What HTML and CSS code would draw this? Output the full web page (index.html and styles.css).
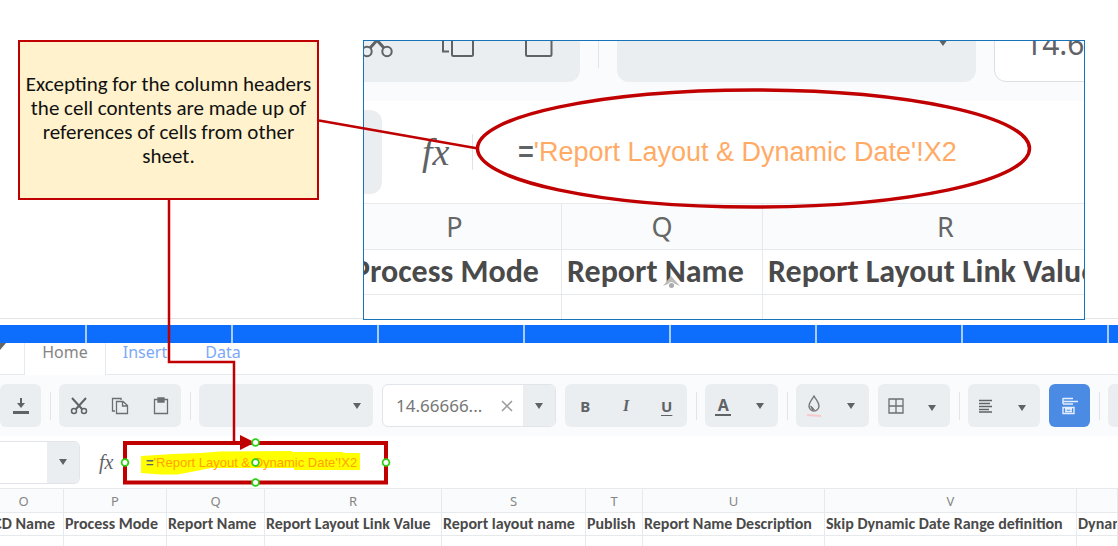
FILE: index.html
```html
<!DOCTYPE html>
<html lang="en">
<head>
<meta charset="utf-8">
<title>Report layout sheet</title>
<link rel="stylesheet" href="styles.css">
</head>
<body>
<main class="page">
  <section class="notes">
    <p class="callout">Excepting for the column headers the cell contents are made up of references of cells from other sheet.</p>
    <div class="inset">
      <div class="inset-tools">
        <div class="inset-group">
          <svg class="inset-icons" width="216" height="43" viewBox="0 0 216 43" fill="none" stroke="#5f6366" stroke-width="2">
            <circle cx="3" cy="10.500" r="4.700"/><circle cx="23" cy="10.500" r="4.700"/>
            <path d="M6 7L15 -3M20 7L11 -3" stroke-width="3"/>
            <path d="M79 -4V10.500H85M88 -4V13.500Q88 15 89.500 15H107.500Q109 15 109 13.500V-4M162 -4V13.500Q162 15 163.500 15H186Q187.500 15 187.500 13.500V-4"/>
          </svg>
        </div>
        <span class="inset-sep"></span>
        <div class="inset-font"><svg width="10" height="8" viewBox="0 0 10 8"><path d="M0 0H10L5 7z" fill="#5f6366"/></svg></div>
        <div class="inset-size">14.6</div>
      </div>
      <div class="inset-bar">
        <span class="inset-name"></span>
        <span class="fx fx-large">fx</span>
        <span class="inset-bar-sep"></span>
        <span class="formula formula-large"><b>=</b>'Report Layout &amp; Dynamic Date'!X2</span>
      </div>
      <div class="inset-grid">
        <table class="grid grid-large">
          <colgroup><col class="l-p"><col class="l-q"><col class="l-r"></colgroup>
          <thead><tr><th>P</th><th>Q</th><th>R</th></tr></thead>
          <tbody>
            <tr><td>Process Mode</td><td>Report Name</td><td>Report Layout Link Value</td></tr>
            <tr><td></td><td></td><td></td></tr>
          </tbody>
        </table>
      </div>
    </div>
  </section>

  <section class="sheet">
    <div class="band"><i></i><i></i><i></i><i></i><i></i><i></i><i></i><i></i><i></i></div>
    <nav class="tabs">
      <span class="tab-edge"><svg width="7" height="8" viewBox="0 0 7 8"><path d="M0 0H6L0 7z" fill="#666"/></svg></span>
      <a class="tab active" href="#">Home</a>
      <a class="tab" href="#">Insert</a>
      <a class="tab" href="#">Data</a>
    </nav>
    <div class="tools">
      <div class="group g-save"><button aria-label="Download"><svg width="16" height="18" viewBox="0 0 16 18"><path d="M7 1h2v5h3l-4 5-4-5h3zM0 14h16v3H0z" fill="#5f6366"/></svg></button></div>
      <span class="sep"></span>
      <div class="group g-three">
        <button aria-label="Cut"><svg width="18" height="18" viewBox="0 0 18 18" fill="none" stroke="#5f6366"><path d="M2 1l10 11M16 1L6 12" stroke-width="2"/><circle cx="4" cy="14" r="2.500" stroke-width="1.500"/><circle cx="14" cy="14" r="2.500" stroke-width="1.500"/></svg></button>
        <button aria-label="Copy"><svg width="18" height="18" viewBox="0 0 18 18" fill="none" stroke="#6b6f72" stroke-width="1.300"><path d="M4 14H1.500V1.500H10V3M5.500 4.500H12L16.500 8.500V16.500H5.500zM11.500 4.500V9H16"/></svg></button>
        <button aria-label="Paste"><svg width="18" height="18" viewBox="0 0 18 18" fill="none" stroke="#6b6f72" stroke-width="1.300"><path d="M2.500 2.500H15.500V16.500H2.500z"/><path d="M6 1h6v4H6z" fill="#6b6f72"/></svg></button>
      </div>
      <span class="sep"></span>
      <button class="group g-font" aria-label="Font family"><svg class="caret" viewBox="0 0 8 8"><path d="M0 1H8L4 7z"/></svg></button>
      <div class="combo">
        <input class="size" aria-label="Font size" value="14.66666...">
        <button class="clear" aria-label="Clear"><svg width="12" height="12" viewBox="0 0 12 12"><path d="M1 1L11 11M11 1L1 11" stroke="#999" stroke-width="1.500"/></svg></button>
        <button class="drop" aria-label="Font sizes"><svg class="caret" viewBox="0 0 8 8"><path d="M0 1H8L4 7z"/></svg></button>
      </div>
      <div class="group g-three">
        <button class="bold">B</button><button class="italic">I</button><button class="under">U</button>
      </div>
      <span class="sep"></span>
      <div class="group g-pair">
        <button aria-label="Text color"><span class="ink">A</span></button>
        <button aria-label="Text colors"><svg class="caret" viewBox="0 0 8 8"><path d="M0 1H8L4 7z"/></svg></button>
      </div>
      <span class="sep"></span>
      <div class="group g-pair">
        <button aria-label="Fill color"><svg width="16" height="22" viewBox="0 0 16 22" fill="none"><path d="M8 1C6 5 3 7 3 11a5 5 0 0 0 10 0C13 7 10 5 8 1z" stroke="#777" stroke-width="1.400"/><path d="M4 11c2-1 3 2 5 4H6z" fill="#777"/><path d="M1 20l14 1" stroke="#f6c9cd" stroke-width="2"/></svg></button>
        <button aria-label="Fill colors"><svg class="caret" viewBox="0 0 8 8"><path d="M0 1H8L4 7z"/></svg></button>
      </div>
      <div class="group g-tight">
        <button aria-label="Borders"><svg width="16" height="16" viewBox="0 0 16 16" fill="none" stroke="#6b6f72" stroke-width="1.300"><path d="M1 1H15V15H1zM8 1V15M1 8H15"/></svg></button>
        <button class="low" aria-label="Border styles"><svg class="caret" viewBox="0 0 8 8"><path d="M0 1H8L4 7z"/></svg></button>
      </div>
      <span class="sep"></span>
      <div class="group g-tight">
        <button aria-label="Align"><svg width="14" height="14" viewBox="0 0 14 14" stroke="#5f6366" stroke-width="1.300"><path d="M0 1.500H13M0 4.500H11M0 7.500H13M0 10.500H10M0 13H13"/></svg></button>
        <button class="low" aria-label="Align options"><svg class="caret" viewBox="0 0 8 8"><path d="M0 1H8L4 7z"/></svg></button>
      </div>
      <button class="group wrap" aria-label="Wrap text"><svg width="18" height="18" viewBox="0 0 18 18" fill="none" stroke="#e4eefc" stroke-width="1.400"><path d="M2 1.500H12M2 4.500H17M2 7H12M2 1V7M2 10.500H13V16.500H2zM4 12H11M4 14.500H11M5 12V15M10 12V15"/></svg></button>
      <span class="sep"></span>
      <div class="group g-pair"></div>
    </div>
    <div class="bar">
      <div class="namebox">
        <input class="name" aria-label="Cell name">
        <button class="drop" aria-label="Cell names"><svg class="caret" viewBox="0 0 8 8"><path d="M0 1H8L4 7z"/></svg></button>
      </div>
      <span class="fx">fx</span>
      <span class="marked">
        <svg class="marker" width="219" height="26" viewBox="0 0 219 26"><path d="M0 6L32 4L60 3L79 1.500L151 1V2H202V3H219V20H153V18L100 18L70 18L50 22L36 24.500H20L0 23z" fill="#ff0"/></svg>
        <span class="formula"><b>=</b>'Report Layout &amp; Dynamic Date'!X2</span>
      </span>
    </div>
    <table class="grid">
      <colgroup><col class="c-o"><col class="c-p"><col class="c-q"><col class="c-r"><col class="c-s"><col class="c-t"><col class="c-u"><col class="c-v"><col></colgroup>
      <thead><tr><th>O</th><th>P</th><th>Q</th><th>R</th><th>S</th><th>T</th><th>U</th><th>V</th><th></th></tr></thead>
      <tbody>
        <tr><td class="tail">CD Name</td><td>Process Mode</td><td>Report Name</td><td>Report Layout Link Value</td><td>Report layout name</td><td>Publish</td><td>Report Name Description</td><td>Skip Dynamic Date Range definition</td><td>Dynamic</td></tr>
        <tr><td></td><td></td><td></td><td></td><td></td><td></td><td></td><td></td><td></td></tr>
      </tbody>
    </table>
  </section>

  <svg class="shapes" width="1118" height="546" viewBox="0 0 1118 546" fill="none" stroke="#c00000">
    <ellipse cx="753.500" cy="148.500" rx="276" ry="58.500" stroke-width="3.500"/>
    <path d="M319 120.500L478 148.500" stroke-width="2.500"/>
    <path d="M169 200V362H234V441" stroke-width="2.500"/>
    <rect x="125" y="443" width="261" height="39.500" stroke-width="4"/>
    <path d="M240 435L255 442.500L240 450z" fill="#c00000" stroke="none"/>
    <g stroke="none"><path d="M663 286L671 276L680 286L675 284Q671 280 668 284z" fill="#bbb"/><circle cx="671.500" cy="285.500" r="2.500" fill="#aaa"/></g>
    <g fill="#fff" stroke="#2bd312" stroke-width="1.800">
      <circle cx="255.500" cy="442.500" r="3.400"/><circle cx="255.500" cy="462.500" r="3.400"/><circle cx="255.500" cy="482.500" r="3.400"/><circle cx="125" cy="462.500" r="3.400"/><circle cx="386" cy="462.500" r="3.400"/>
    </g>
  </svg>
</main>
</body>
</html>
```
FILE: styles.css
```css
* { box-sizing: border-box; }
body { margin: 0; background: #fff; font-family: "Noto Sans", sans-serif; }
button, input { font: inherit; margin: 0; padding: 0; border: 0; background: none; color: inherit; }
svg { display: block; }

.page { position: relative; min-height: 100vh; overflow: hidden; }
.shapes { position: absolute; z-index: 2; top: 0; left: 0; pointer-events: none; }

/* Callout and enlarged view */
.notes { position: relative; z-index: 1; display: flex; align-items: flex-start; gap: 44px; padding: 40px 33px 0 18px; }
.callout {
  flex: none; display: flex; align-items: center; width: 301px; min-height: 160px;
  margin: 0; padding: 0 4px; border: 2px solid #c00000; background: #fff2cc;
  color: #111; text-align: center; font: 21px/24px Carlito, Lato, sans-serif;
}
.inset { flex: 1; min-width: 0; overflow: hidden; border: 1px solid #1874b8; background: #fff; }
.inset-tools {
  display: flex; align-items: flex-end; height: 60px; padding-bottom: 19px;
  overflow: hidden; background: #fafbfd;
}
.inset-group { flex: none; width: 216px; height: 84px; padding-top: 43px; border-radius: 0 12px 12px 0; background: #ebeef1; }
.inset-sep { flex: none; width: 1px; height: 56px; margin: 0 18px 14px 18px; background: #e1e4e8; }
.inset-font { flex: none; display: flex; justify-content: flex-end; width: 359px; height: 84px; padding: 41px 28px 0 0; border-radius: 12px; background: #ebeef1; }
.inset-size {
  flex: none; width: 180px; height: 84px; margin-left: 18px; padding: 23px 0 0 30px;
  border: 1px solid #dcdfe3; border-radius: 12px; background: #fff; color: #5f6366; font-size: 30px; line-height: 44px;
}
.inset-bar { display: flex; align-items: center; height: 102px; }
.inset-name { flex: none; width: 18px; height: 84px; border-radius: 0 12px 12px 0; background: #ebeef1; }
.inset-bar-sep { width: 1px; height: 36px; margin: 0 45px 0 18px; background: #dfe2e6; }
.inset-grid { height: 116px; overflow: hidden; }

/* Sheet */
.sheet { margin-top: -2px; border-top: 1px solid #e3e6e9; padding-top: 6px; }
.band { display: flex; height: 18px; overflow: hidden; background: #0d6efd; }
.band i { flex: none; width: 146px; border-right: 2px solid #a9cbfb; }
.band i:first-child { width: 87px; }
.tabs { display: flex; height: 32px; border-bottom: 1px solid #e7eaed; font-size: 16px; line-height: 18px; }
.tab-edge { width: 24px; }
.tab { width: 78px; color: #7ba8f8; text-align: center; text-decoration: none; }
.tab.active { width: 82px; height: 32px; border: solid #e7eaed; border-width: 0 1px; background: #fff; color: #858585; }
.tools { display: flex; align-items: center; gap: 9px; height: 61px; overflow: hidden; background: #fafbfd; color: #5f6366; }
.sep { flex: none; width: 1px; height: 28px; margin-right: -1px; background: #e1e4e8; }
.group { flex: none; display: flex; height: 43px; border-radius: 6px; background: #ebeef1; }
.group button { flex: 1; display: flex; align-items: center; justify-content: center; font-size: 15px; line-height: 20px; }
.g-save { width: 41px; }
.g-three { width: 122px; }
.g-pair { width: 73px; }
.g-tight { width: 72px; }
.g-font { width: 174px; align-items: center; justify-content: flex-end; padding-right: 12px; }
.wrap { width: 41px; align-items: center; justify-content: center; background: #4b8be3; }
.group .low { padding-top: 4px; }
.caret { width: 8px; height: 8px; fill: #5f6366; }
.combo, .namebox { flex: none; display: flex; height: 43px; border: 1px solid #e1e4e8; border-radius: 6px; background: #fff; overflow: hidden; }
.combo { width: 174px; }
.combo .size { flex: 1; min-width: 0; padding-left: 13px; color: #777; font-size: 17px; }
.clear { width: 32px; display: flex; align-items: center; justify-content: center; }
.drop { flex: none; width: 32px; display: flex; align-items: center; justify-content: center; background: #ebeef1; }
.group .bold { font-weight: 700; }
.group .italic { font: italic 700 16px/20px "Liberation Serif", serif; }
.group .under { font-weight: 700; text-decoration: underline; text-underline-offset: 3px; }
.ink { border-bottom: 2px solid #5f6366; width: 16px; font-weight: 700; font-size: 16px; line-height: 18px; }
.bar { display: flex; align-items: center; height: 52px; }
.namebox { width: 80px; border-radius: 0 6px 6px 0; border-left: 0; }
.name { flex: 1; min-width: 0; }
.fx { width: 61px; padding-left: 19px; color: #5f6366; font: italic 20px/24px "Liberation Serif", serif; }
.fx-large { width: 72px; padding-left: 40px; font-size: 38px; line-height: 44px; }
.marked { position: relative; padding-left: 5px; }
.marker { position: absolute; left: 0; top: 0; }
.formula { position: relative; white-space: nowrap; color: #ffa200; font: 13px/24px "Liberation Sans", Arial, sans-serif; }
.formula b { color: #5f6366; }
.formula-large { color: #ffab66; font-size: 27px; line-height: 32px; }

/* Cell grids */
.grid { width: calc(100% + 17px); margin-left: -17px; table-layout: fixed; border-collapse: collapse; color: #4a4a4a; }
.grid th, .grid td { height: 23px; padding: 0 0 0 1px; border: 1px solid #e7eaed; overflow: hidden; white-space: nowrap; }
.grid th { height: 24px; padding: 0; background: #fafbfd; color: #858585; font-size: 13px; line-height: 20px; font-weight: 400; }
.grid td { font: 700 16px/20px Carlito, Lato, sans-serif; }
.grid .tail { padding-right: 8px; text-align: right; }
.c-o { width: 80px; } .c-p { width: 103px; } .c-q { width: 98px; } .c-r { width: 177px; } .c-s { width: 144px; }
.c-t { width: 57px; } .c-u { width: 182px; } .c-v { width: 252px; }
.grid-large { width: 781px; margin-left: -17px; }
.grid-large th { height: 46px; color: #666; font-size: 27px; line-height: 36px; }
.grid-large td { height: 45px; padding-left: 5px; font-size: 32px; line-height: 36px; }
.l-p { width: 214px; } .l-q { width: 201px; } .l-r { width: 366px; }
```
